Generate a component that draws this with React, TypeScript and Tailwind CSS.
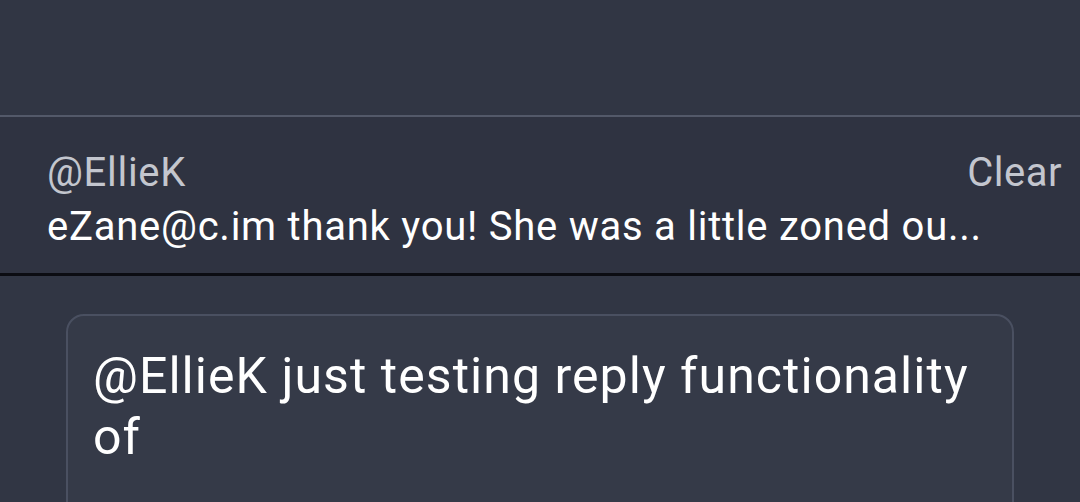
export default function App() {
  return (
    <div
      className="w-[1080px] h-[502px] overflow-hidden bg-[#313644] flex flex-col"
      style={{ fontFamily: "Roboto, 'Noto Sans', sans-serif" }}
    >
      <div className="h-[115px] shrink-0" />
      <div className="h-[2px] shrink-0 bg-[#535969]" />
      <div className="h-[156px] shrink-0 bg-[#2f3341] pl-[47px] pr-[18px] flex flex-col">
        <div className="flex items-start justify-between pt-[32px]">
          <span className="text-[40px] leading-[48px] tracking-[0.7px] text-[#c3c6ce]">@EllieK</span>
          <span className="text-[40px] leading-[48px] tracking-[0.5px] text-[#c3c6ce]">Clear</span>
        </div>
        <div className="text-[40px] leading-[48px] tracking-[0.75px] text-white mt-[6px] whitespace-nowrap">
          eZane@c.im thank you! She was a little zoned ou...
        </div>
      </div>
      <div className="h-[3px] shrink-0 bg-[#0b0c12]" />
      <div className="flex-1 pt-[38px] pl-[66px] pr-[66px]">
        <div className="h-[250px] rounded-[18px] border-2 border-[#4a5061] bg-[#353a48] pl-[25px] pr-[34px] pt-[30px]">
          <div className="text-[50px] leading-[61px] tracking-[1.05px] text-white">
            @EllieK just testing reply functionality of
          </div>
        </div>
      </div>
    </div>
  );
}
